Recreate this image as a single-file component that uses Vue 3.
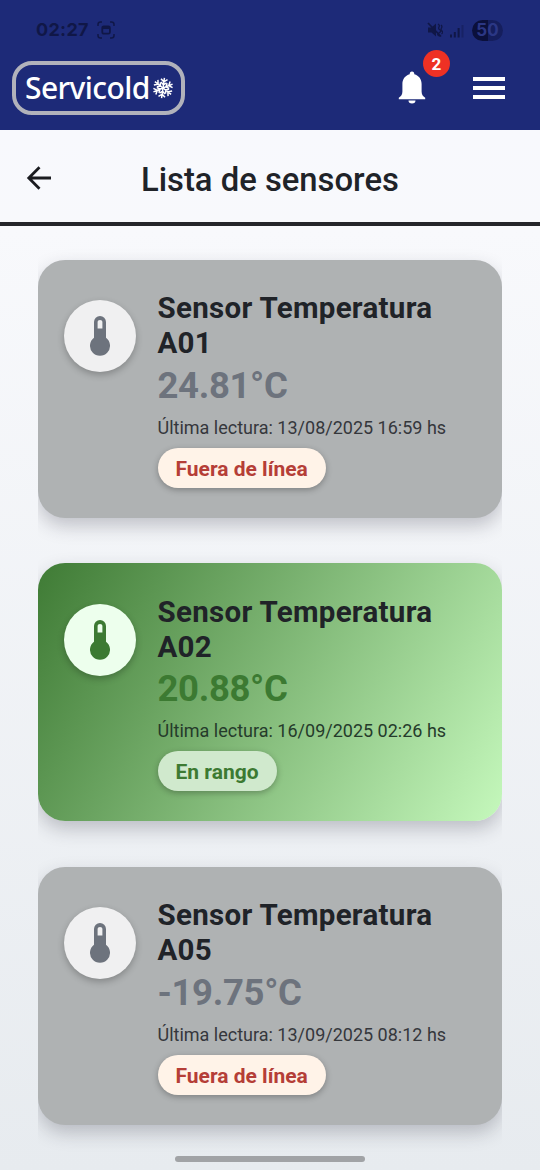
<script setup>
const sensors = [
  { name: 'Sensor Temperatura A01', value: '24.81°C', read: '13/08/2025 16:59 hs', status: 'Fuera de línea', online: false },
  { name: 'Sensor Temperatura A02', value: '20.88°C', read: '16/09/2025 02:26 hs', status: 'En rango', online: true },
  { name: 'Sensor Temperatura A05', value: '-19.75°C', read: '13/09/2025 08:12 hs', status: 'Fuera de línea', online: false }
]
const arms = [0, 60, 120, 180, 240, 300]
</script>

<template>
  <div class="screen">
    <header class="top">
      <div class="status">
        <span class="clock">02:27</span>
        <svg class="capture" width="18" height="18" viewBox="0 0 18 18" fill="none" stroke="#101747" stroke-width="1.5">
          <path d="M1 5V3.500Q1 1 3.500 1H5M13 1h1.500Q17 1 17 3.500V5M17 13v1.500Q17 17 14.500 17H13M5 17H3.500Q1 17 1 14.500V13" />
          <rect x="5.300" y="5.300" width="7.600" height="7.400" rx="1.500" stroke-width="1.800" />
          <path d="M5.500 6.800h7" stroke-width="2.500" />
        </svg>
        <svg class="mute" width="16" height="16" viewBox="0 0 16 16" fill="none" stroke="#101747" stroke-width="1.800">
          <path d="M1 5.500h3.500L9 1.500v13L4.500 10.500H1Z" fill="#101747" stroke="none" />
          <path d="M1 1l13 13.500" />
          <path d="M11 2q2 1 1 3t1 3-1 3 1 3M14 3q1.500 1.500.5 3t.5 3-.5 3" stroke-width="1.300" />
        </svg>
        <svg class="signal" width="14" height="14" viewBox="0 0 14 14" fill="#101747">
          <rect x="0" y="10.500" width="2" height="3" /><rect x="3.800" y="8" width="2" height="5.500" />
          <rect x="7.600" y="4" width="2" height="9.500" /><rect x="11.500" y="1" width="2" height="12.500" opacity=".4" />
        </svg>
        <span class="battery">50</span>
      </div>
      <div class="nav">
        <div class="logo">
          <span>Servicold</span>
          <svg width="20" height="22" viewBox="-10 -11 20 22" fill="none" stroke="#fff" stroke-width="1.500">
            <g v-for="a in arms" :key="a" :transform="`rotate(${a + 8})`">
              <path d="M0 0V-10.300M-3.300 -9L0 -6.200L3.300 -9M-2.800 -5.600L0 -3.200L2.800 -5.600" />
            </g>
          </svg>
        </div>
        <div class="bell">
          <svg width="28" height="34" viewBox="0 0 28 34" fill="#fff">
            <path d="M11.700 3.200a2.300 2.600 0 0 1 4.600 0C21 4.500 23.600 8.300 23.600 13v7.500c0 3 1.200 4.700 3.600 6.300v1.500H.8v-1.500C3.200 25.200 4.400 23.500 4.400 20.500V13C4.400 8.300 7 4.500 11.700 3.200Z" />
            <path d="M10.500 29.500h7a3.500 3 0 0 1-7 0Z" />
          </svg>
          <span class="badge">2</span>
        </div>
        <div class="menu"><i></i><i></i><i></i></div>
      </div>
    </header>

    <div class="titlebar">
      <svg width="26" height="26" viewBox="0 0 26 26" fill="none" stroke="#1b1c20" stroke-width="2.800">
        <path d="M25 13H3M13.500 2.300L2.800 13L13.500 23.700" />
      </svg>
      <h1>Lista de sensores</h1>
    </div>

    <main class="list">
      <article v-for="s in sensors" :key="s.name" class="card" :class="{ ok: s.online }">
        <div class="disc">
          <svg width="20" height="40" viewBox="0 0 20 40">
            <path fill="currentColor" fill-rule="evenodd" d="M4 6a6 6 0 0 1 12 0v15.800a10 10 0 1 1-12 0ZM7.600 5.700v6.800h4.800V5.700a2.400 1.800 0 0 0-4.800 0Z" />
          </svg>
        </div>
        <div class="info">
          <h2>{{ s.name }}</h2>
          <div class="value">{{ s.value }}</div>
          <div class="read">Última lectura: {{ s.read }}</div>
          <span class="chip">{{ s.status }}</span>
        </div>
      </article>
    </main>
    <div class="homebar"></div>
  </div>
</template>

<style>
body { margin: 0; }
</style>

<style scoped>
* { box-sizing: border-box; }
.screen {
  position: relative; width: 540px; height: 1170px; overflow: hidden;
  font-family: Roboto, "Noto Sans", sans-serif; color: #202328;
  background: linear-gradient(#f8f9fd 130px, #f8f9fc 230px, #e7ebef 1170px);
}
.top { height: 130px; background: #1d2a78; }
.status { display: flex; align-items: center; height: 60px; padding: 0 36px; color: #101747; }
.clock { font: 700 18px/20px Inter, sans-serif; width: 61px; letter-spacing: .3px; }
.mute { margin-left: 312px; }
.signal { margin-left: 7px; margin-top: 2px; }
.battery {
  margin-left: 8px; width: 31px; height: 21px; border-radius: 11px; text-align: center;
  font: 700 17px/21px Inter, sans-serif; color: #2b3785;
  background: linear-gradient(90deg, #0b103b 50%, #151e5d 50%);
}
.nav { display: flex; height: 56px; padding-left: 12px; }
.logo {
  width: 173px; height: 54px; margin-top: 1px; border: 4.500px solid #b1b2bb; border-radius: 20px;
  display: flex; align-items: center; padding-left: 9px; color: #fff;
  font: 500 30px/40px "Noto Sans", sans-serif; letter-spacing: -.6px;
}
.logo span { width: 128px; white-space: nowrap; margin-top: -1px; }
.bell { position: relative; margin: 11px 0 0 213px; width: 28px; height: 34px; }
.badge {
  position: absolute; left: 25px; top: -21px; width: 27px; height: 27px; border-radius: 50%;
  background: #ee3124; color: #fff; font-size: 17px; font-weight: 700; line-height: 28px; text-align: center;
}
.menu { width: 32px; margin: 17px 0 0 47px; }
.menu i { display: block; height: 4px; margin-bottom: 5px; background: #fff; }
.titlebar {
  height: 96px; border-bottom: 4px solid #25262a; display: flex; align-items: center;
  padding: 4px 0 0 26px;
}
.titlebar h1 { margin: 4px 0 0 89px; font-size: 32.800px; font-weight: 500; line-height: 40px; white-space: nowrap; }
.list {
  margin: 0 38px; height: 944px; padding-top: 33.800px; overflow: hidden;
  display: flex; flex-direction: column; gap: 45.400px;
}
.card {
  flex: none; height: 258px; border-radius: 27px; background: #afb2b3; display: flex;
  padding: 31.400px 26.500px; gap: 21.500px; color: #6d737d; box-shadow: 0 8px 18px rgba(45, 45, 60, .25);
}
.card.ok { color: #3c7a32; background: linear-gradient(120deg, #3f7b35, #c5f8bc); }
.disc {
  flex: none; width: 72px; height: 72px; margin: 9px 0 0 -.5px; border-radius: 50%; background: #f0f0f1;
  display: grid; place-items: center; box-shadow: 0 3px 7px rgba(0, 0, 0, .24);
}
.ok .disc { background: #edffed; }
.info { flex: 1; min-width: 0; }
h2 { margin: 0; font-size: 29.500px; line-height: 35.300px; font-weight: 700; letter-spacing: .3px; color: #202328; }
.value { font-size: 36.500px; line-height: 47px; font-weight: 700; letter-spacing: -.35px; }
.read { margin-top: 7px; font-size: 18px; line-height: 24px; color: #35373c; white-space: nowrap; }
.ok .read { color: #253b2b; }
.chip {
  display: inline-block; height: 40px; margin-top: 8px; padding: 0 18px; border-radius: 20px;
  background: #fff3e8; color: #b53e37; font-size: 21px; line-height: 42px; font-weight: 700;
  box-shadow: 0 2px 6px rgba(0, 0, 0, .28);
}
.ok .chip { background: #d0e9cd; color: #3c7a32; }
.homebar { position: absolute; left: 175px; top: 1156px; width: 190px; height: 6px; border-radius: 3px; background: #a1a3a6; }
</style>
